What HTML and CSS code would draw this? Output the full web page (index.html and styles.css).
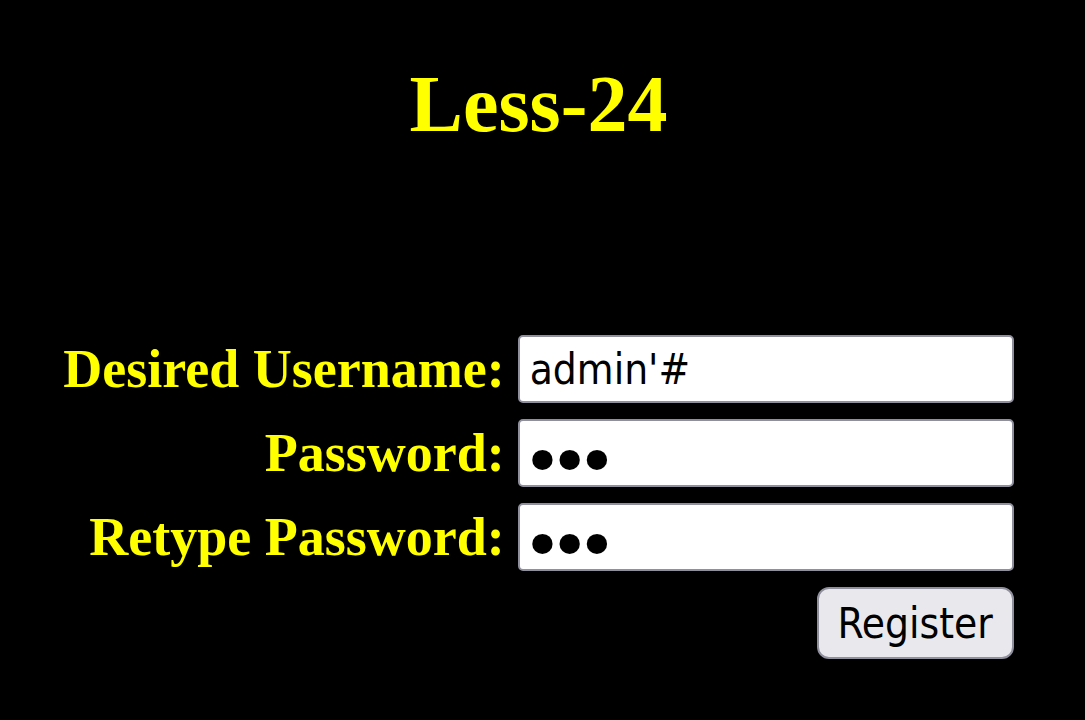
FILE: index.html
```html
<!DOCTYPE html>
<html>
<head>
<meta charset="utf-8">
<link rel="stylesheet" href="styles.css">
</head>
<body>
<div class="page">
  <h1 class="title">Less-24</h1>
  <form class="form">
    <label class="label" for="u">Desired Username:</label>
    <input class="field" id="u" type="text" value="admin'#">
    <label class="label" for="p">Password:</label>
    <input class="field secret" id="p" type="password" value="123">
    <label class="label" for="r">Retype Password:</label>
    <input class="field secret" id="r" type="password" value="123">
    <div class="actions">
      <button class="btn" type="button">Register</button>
    </div>
  </form>
</div>
</body>
</html>
```
FILE: styles.css
```css
html, body {
  margin: 0;
  padding: 0;
  background: #000;
}
.page {
  width: 1085px;
  height: 720px;
  display: flex;
  flex-direction: column;
  align-items: center;
}
.title {
  margin: 58px 0 0 0;
  font-family: "Liberation Serif", serif;
  font-weight: bold;
  font-size: 80px;
  line-height: 92px;
  color: #ffff00;
  transform: translateX(-4px);
}
.form {
  margin-top: 185px;
  margin-right: 8px;
  display: grid;
  grid-template-columns: auto 496px;
  column-gap: 13px;
  row-gap: 16px;
  align-items: center;
}
.label {
  font-family: "Liberation Serif", serif;
  font-weight: bold;
  font-size: 54px;
  color: #ffff00;
  text-align: right;
  white-space: nowrap;
}
.field {
  box-sizing: border-box;
  width: 496px;
  height: 68px;
  margin: 0;
  padding: 0 10px;
  border: 2px solid #8f8f9d;
  border-radius: 5px;
  background: #fff;
  font-family: "DejaVu Sans Condensed", "DejaVu Sans", sans-serif;
  font-stretch: condensed;
  font-size: 42px;
  color: #000;
  outline: none;
}
.secret {
  font-family: "DejaVu Sans", sans-serif;
  font-stretch: normal;
  font-size: 70px;
  letter-spacing: -14px;
  padding: 18px 8px 0 2px;
  line-height: 64px;
}
.actions {
  grid-column: 2;
  display: flex;
  justify-content: flex-end;
}
.btn {
  box-sizing: border-box;
  width: 197px;
  height: 72px;
  margin: 0;
  padding: 0;
  border: 2px solid #8f8f9d;
  border-radius: 12px;
  background: #e9e9ed;
  font-family: "DejaVu Sans Condensed", "DejaVu Sans", sans-serif;
  font-stretch: condensed;
  font-size: 42px;
  color: #000;
}
```
